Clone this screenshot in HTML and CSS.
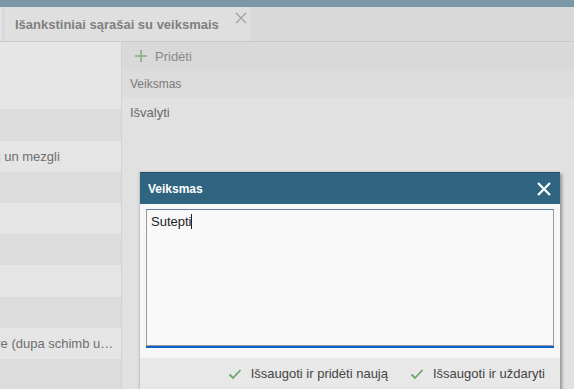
FILE: index.html
```html
<!DOCTYPE html>
<html lang="lt">
<head>
<meta charset="utf-8">
<link rel="stylesheet" href="styles.css">
</head>
<body>
<div class="app">
  <div class="topbar"></div>
  <div class="tabstrip">
    <div class="tab-edge"></div>
    <div class="tab">
      <span class="tab-title">Išankstiniai sąrašai su veiksmais</span>
      <svg class="tab-close" width="12" height="12" viewBox="0 0 12 12"><path d="M1 1L11 11M11 1L1 11" stroke="#a0a0a0" stroke-width="1.2" fill="none"/></svg>
    </div>
  </div>
  <div class="main">
    <div class="left">
      <div class="lrow lrow-top"></div>
      <div class="lrow dark tall"></div>
      <div class="lrow"><span class="cell">Patikrinti grandines un mezgli</span></div>
      <div class="lrow dark"></div>
      <div class="lrow"></div>
      <div class="lrow dark"></div>
      <div class="lrow tall"></div>
      <div class="lrow dark"></div>
      <div class="lrow"><span class="cell">Schimbare ulei, filtre (dupa schimb ulei)</span></div>
      <div class="lrow dark"></div>
    </div>
    <div class="right">
      <div class="toolbar">
        <svg class="plus" width="12" height="12" viewBox="0 0 12 12"><path d="M6 0V12M0 6H12" stroke="#7db37d" stroke-width="1.6" fill="none"/></svg>
        <span class="add">Pridėti</span>
      </div>
      <div class="colhead">Veiksmas</div>
      <div class="rrow">Išvalyti</div>
    </div>
  </div>
  <div class="dialog">
    <div class="dlg-head">
      <span class="dlg-title">Veiksmas</span>
      <svg class="dlg-close" width="16" height="16" viewBox="0 0 16 16"><path d="M2 2L14 14M14 2L2 14" stroke="#fff" stroke-width="2.2" fill="none"/></svg>
    </div>
    <div class="dlg-body">
      <div class="field">
        <div class="input">Sutepti<span class="caret"></span></div>
      </div>
    </div>
    <div class="dlg-foot">
      <button class="btn"><svg width="14" height="12" viewBox="0 0 14 12"><path d="M1.5 6.5L5 10L12.5 2" stroke="#6aa86a" stroke-width="1.8" fill="none"/></svg>Išsaugoti ir pridėti naują</button>
      <button class="btn"><svg width="14" height="12" viewBox="0 0 14 12"><path d="M1.5 6.5L5 10L12.5 2" stroke="#6aa86a" stroke-width="1.8" fill="none"/></svg>Išsaugoti ir uždaryti</button>
    </div>
  </div>
</div>
</body>
</html>
```
FILE: styles.css
```css
html, body {
  margin: 0;
  padding: 0;
}
body {
  font-family: "Liberation Sans", Arial, sans-serif;
  background: #e1e1e1;
  overflow: hidden;
}
.app {
  position: relative;
  width: 574px;
  height: 389px;
  overflow: hidden;
  display: flex;
  flex-direction: column;
}
.topbar {
  height: 7px;
  background: #7b98a8;
  flex-shrink: 0;
}
.tabstrip {
  height: 34px;
  background: #d9d9d9;
  border-bottom: 1px solid #c9c9c9;
  display: flex;
  flex-shrink: 0;
}
.tab-edge {
  width: 2px;
  background: #e2e2e2;
  margin-right: 3px;
}
.tab {
  width: 245px;
  background: #dfdfdf;
  display: flex;
  align-items: flex-start;
  position: relative;
}
.tab-title {
  font-size: 13px;
  font-weight: bold;
  color: #808080;
  margin: 10px 0 0 10px;
  white-space: nowrap;
}
.tab-close {
  position: absolute;
  left: 230px;
  top: 5px;
}
.main {
  flex: 1;
  display: flex;
  min-height: 0;
}
.left {
  width: 121px;
  border-right: 1px solid #d2d2d2;
  display: flex;
  flex-direction: column;
  flex-shrink: 0;
  overflow: hidden;
}
.lrow {
  height: 31px;
  background: #e5e5e5;
  display: flex;
  align-items: center;
  overflow: hidden;
  flex-shrink: 0;
}
.lrow.tall {
  height: 32px;
}
.lrow-top {
  height: 67px;
  background: #e6e6e6;
}
.lrow.dark {
  background: #dcdcdc;
}
.cell {
  flex-shrink: 0;
  margin-left: -118px;
  padding-left: 8px;
  width: 224px;
  white-space: nowrap;
  overflow: hidden;
  text-overflow: ellipsis;
  font-size: 13px;
  color: #6e6e6e;
}
.right {
  flex: 1;
  display: flex;
  flex-direction: column;
  background: #e1e1e1;
}
.toolbar {
  height: 28px;
  background: #d9d9d9;
  display: flex;
  align-items: center;
  padding-left: 13px;
}
.plus {
  margin-right: 8px;
}
.add {
  font-size: 13px;
  color: #8a8a8a;
}
.colhead {
  height: 27px;
  background: #dcdcdc;
  font-size: 12px;
  color: #7a7a7a;
  display: flex;
  align-items: center;
  padding-left: 8px;
}
.rrow {
  height: 31px;
  font-size: 13px;
  color: #6a6a6a;
  display: flex;
  align-items: center;
  padding-left: 8px;
}
.dialog {
  position: absolute;
  left: 140px;
  top: 172px;
  width: 420px;
  height: 240px;
  background: #f7f7f7;
  box-shadow: 2px 2px 3px rgba(0,0,0,0.35), -1px 0 2px rgba(0,0,0,0.15);
  display: flex;
  flex-direction: column;
}
.dlg-head {
  height: 32px;
  flex-shrink: 0;
  background: #2f6581;
  border-top: 1px solid #24506a;
  box-sizing: border-box;
  display: flex;
  align-items: center;
  justify-content: space-between;
  padding: 0 8px 0 8px;
}
.dlg-title {
  font-size: 12px;
  font-weight: bold;
  color: #fff;
}
.dlg-body {
  padding: 5px 6px 0 6px;
  height: 149px;
  flex-shrink: 0;
  box-sizing: border-box;
}
.field {
  height: 137px;
  border: 1px solid #9a9a9a;
  border-top-color: #5f7fa6;
  box-shadow: 0 2px 0 #0b63c9;
  box-sizing: border-box;
  background: #f8f8f8;
  padding: 3px 4px;
}
.input {
  font-size: 13px;
  color: #222;
  line-height: 17px;
}
.caret {
  display: inline-block;
  width: 1px;
  height: 15px;
  background: #222;
  vertical-align: -3px;
}
.dlg-foot {
  margin-top: 5px;
  height: 31px;
  flex-shrink: 0;
  background: #e8e8e8;
  display: flex;
  justify-content: flex-end;
  align-items: center;
  gap: 22px;
  padding-right: 15px;
}
.btn {
  border: 0;
  background: transparent;
  padding: 0;
  font-family: inherit;
  font-size: 13px;
  color: #444;
  display: flex;
  align-items: center;
  gap: 9px;
}
```
